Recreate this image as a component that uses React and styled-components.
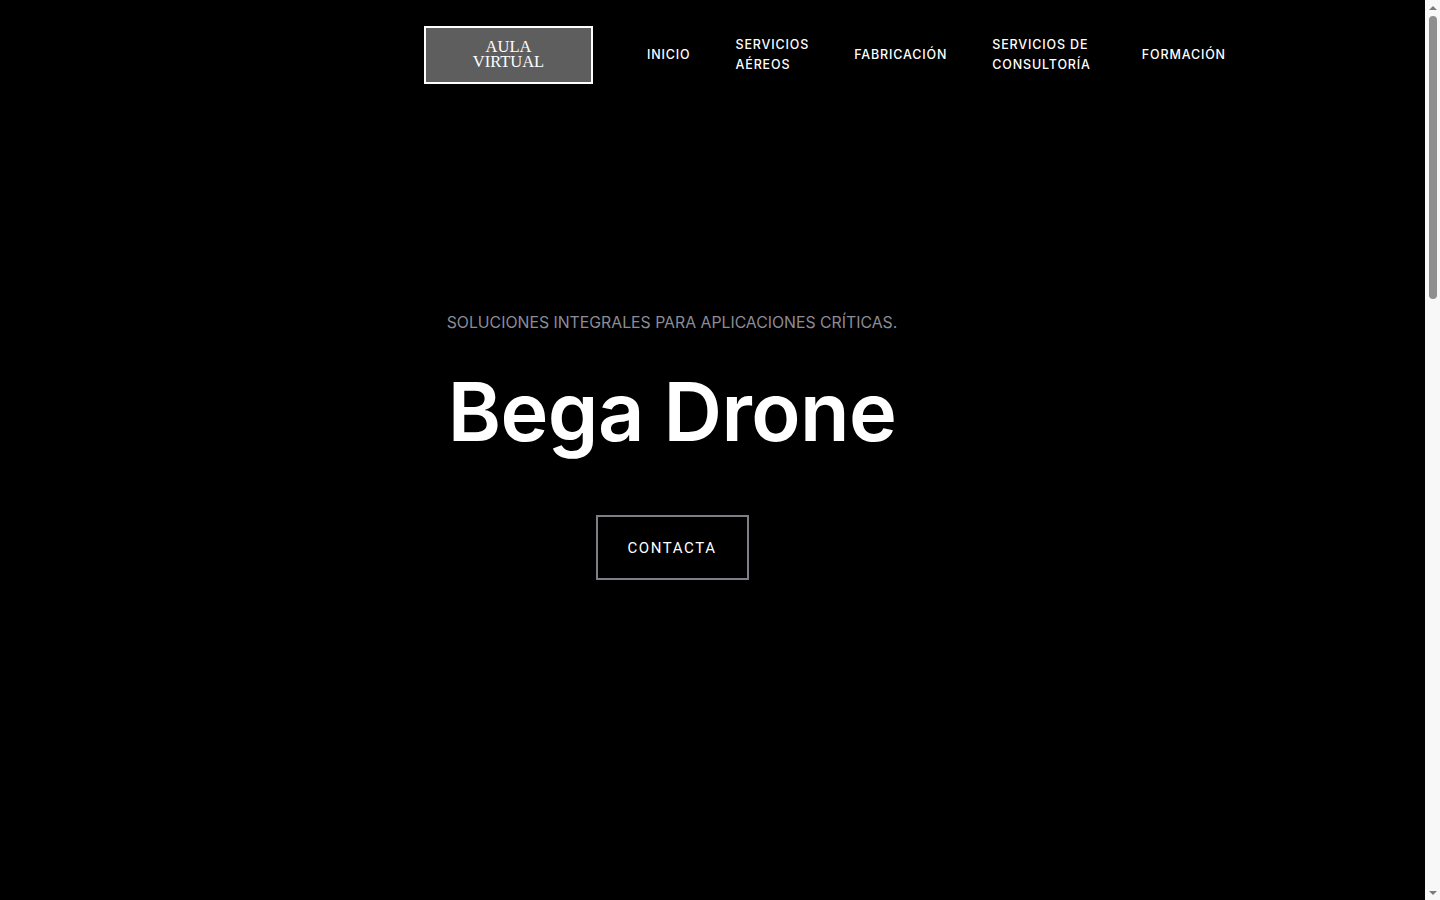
import React from 'react'
import styled, {createGlobalStyle} from 'styled-components'

const Global = createGlobalStyle`
  html, body {
    margin: 0;
    padding: 0;
    background: #000;
  }
  body {
    font-family: "Inter", "Open Sans", sans-serif;
    color: #fff;
  }
`

const Page = styled.div`
  display: flex;
  align-items: flex-start;
  background: #000;
`

const Main = styled.main`
  flex: 1;
  min-height: 2780px;
`

// browser-like scrollbar strip on the right edge
const ScrollBar = styled.aside`
  position: sticky;
  top: 0;
  width: 15px;
  height: 100vh;
  background: #f8f8f8;
  display: flex;
  flex-direction: column;
  align-items: center;
`

const Arrow = styled.div`
  width: 0;
  height: 0;
  margin: ${p => p.$down ? '6px 0 5px' : '6px 0 4px'};
  border-left: 4px solid transparent;
  border-right: 4px solid transparent;
  ${p => p.$down
    ? 'border-top: 4px solid #7a7a7a;'
    : 'border-bottom: 4px solid #7a7a7a;'}
`

const Track = styled.div`
  flex: 1;
  width: 100%;
  display: flex;
  justify-content: center;
  padding-top: 2px;
`

const Thumb = styled.div`
  width: 8px;
  height: 283px;
  border-radius: 4px;
  background: #8f8f8f;
`

const Header = styled.header`
  display: flex;
  align-items: center;
  padding: 26px 0 0 424px;
`

const AulaButton = styled.a`
  box-sizing: border-box;
  width: 169px;
  height: 58px;
  padding-bottom: 2px;
  display: flex;
  align-items: center;
  justify-content: center;
  text-align: center;
  background: #5e5e5e;
  border: 2px solid #fff;
  color: #fff;
  font-family: "Liberation Serif", "Times New Roman", serif;
  font-size: 16.5px;
  line-height: 15px;
  text-decoration: none;
  margin-right: 54px;
`

const Nav = styled.nav`
  display: flex;
  align-items: center;
  gap: 45px;
`

const NavItem = styled.a`
  color: #fff;
  font-family: "Inter", sans-serif;
  font-weight: 500;
  font-size: 12.5px;
  letter-spacing: 0.85px;
  line-height: 20px;
  text-decoration: none;
  text-transform: uppercase;
  margin-left: ${p => p.$extra || 0}px;
`

const Hero = styled.section`
  display: flex;
  flex-direction: column;
  align-items: center;
  padding: 227px 81px 0 0;
`

const Tagline = styled.p`
  margin: 0;
  color: #8c8c98;
  font-family: "Inter", sans-serif;
  font-size: 15.8px;
  letter-spacing: 0;
  line-height: 24px;
`

const Title = styled.h1`
  margin: 27px 0 0;
  font-family: "Inter", sans-serif;
  font-weight: 600;
  font-size: 81px;
  line-height: 100px;
  letter-spacing: -0.6px;
  color: #fff;
`

const ContactButton = styled.a`
  box-sizing: border-box;
  margin-top: 53px;
  width: 153px;
  height: 65px;
  display: flex;
  align-items: center;
  justify-content: center;
  border: 2px solid #7e7e88;
  color: #fff;
  font-family: "Roboto", sans-serif;
  font-size: 15px;
  letter-spacing: 1.6px;
  text-decoration: none;
`

const links = [
  {label: 'Inicio'},
  {label: <>Servicios<br />Aéreos</>},
  {label: 'Fabricación'},
  {label: <>Servicios de<br />Consultoría</>},
  {label: 'Formación', extra: 6},
]

export default function App() {
  return (
    <Page>
      <Global />
      <Main>
        <Header>
          <AulaButton href="#">AULA<br />VIRTUAL</AulaButton>
          <Nav>
            {links.map((l, i) => (
              <NavItem key={i} href="#" $extra={l.extra}>{l.label}</NavItem>
            ))}
          </Nav>
        </Header>
        <Hero>
          <Tagline>SOLUCIONES INTEGRALES PARA APLICACIONES CRÍTICAS.</Tagline>
          <Title>Bega Drone</Title>
          <ContactButton href="#">CONTACTA</ContactButton>
        </Hero>
      </Main>
      <ScrollBar>
        <Arrow />
        <Track><Thumb /></Track>
        <Arrow $down />
      </ScrollBar>
    </Page>
  )
}
